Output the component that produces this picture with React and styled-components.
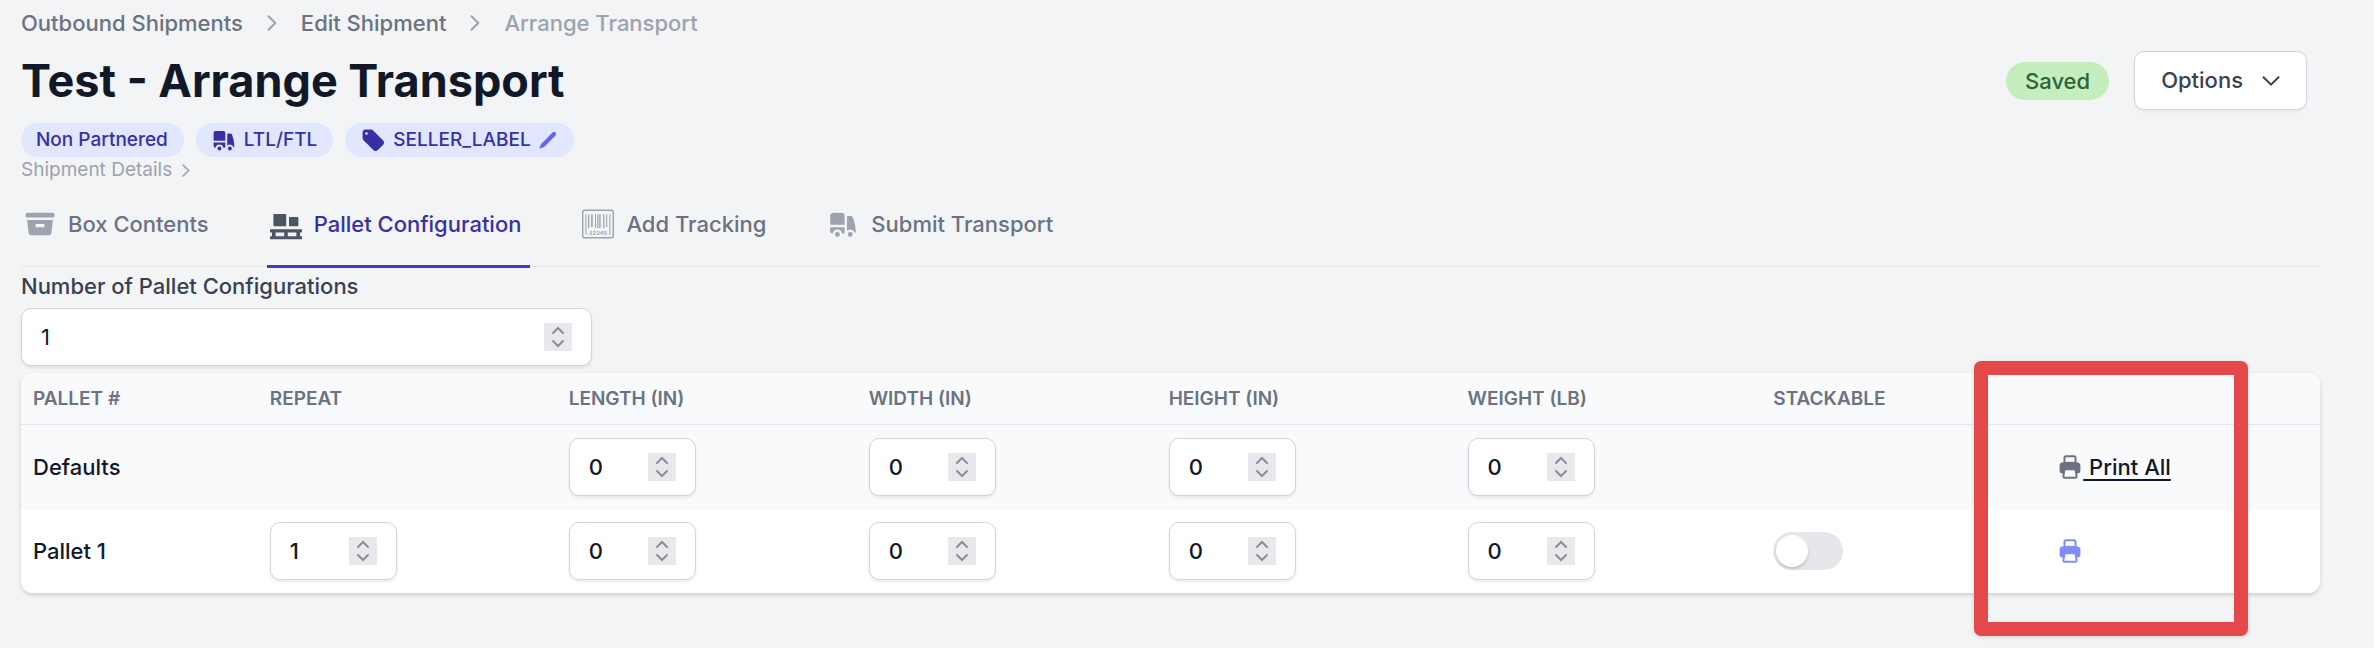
import React, { useState } from "react";
import styled, { createGlobalStyle } from "styled-components";

const ICONS = {
  truck:
    "M6.5 3c-1.051 0-2.093.04-3.125.117A1.49 1.49 0 0 0 2 4.607V10.5h9V4.606c0-.771-.59-1.43-1.375-1.489A41.568 41.568 0 0 0 6.5 3ZM2 12v2.5A1.5 1.5 0 0 0 3.5 16h.041a3 3 0 0 1 5.918 0h.791a.75.75 0 0 0 .75-.75V12H2ZM6.5 18a1.5 1.5 0 1 0 0-3 1.5 1.5 0 0 0 0 3ZM13.25 5a.75.75 0 0 0-.75.75v8.514a3.001 3.001 0 0 1 4.893 1.44c.37-.275.61-.719.595-1.227a24.905 24.905 0 0 0-1.784-8.549A1.486 1.486 0 0 0 14.823 5H13.25ZM14.5 18a1.5 1.5 0 1 0 0-3 1.5 1.5 0 0 0 0 3Z",
  tag: "M4.5 2A2.5 2.5 0 0 0 2 4.5v3.879a2.5 2.5 0 0 0 .732 1.767l7.5 7.5a2.5 2.5 0 0 0 3.536 0l3.878-3.878a2.5 2.5 0 0 0 0-3.536l-7.5-7.5A2.5 2.5 0 0 0 8.38 2H4.5ZM5 6a1 1 0 1 0 0-2 1 1 0 0 0 0 2Z",
  pencil:
    "m2.695 14.762-1.262 3.155a.5.5 0 0 0 .65.65l3.155-1.262a4 4 0 0 0 1.343-.886L17.5 5.501a2.121 2.121 0 0 0-3-3L3.58 13.419a4 4 0 0 0-.885 1.343Z",
  archive:
    "M2 3a1 1 0 0 0-1 1v1a1 1 0 0 0 1 1h16a1 1 0 0 0 1-1V4a1 1 0 0 0-1-1H2ZM2 7.5h16l-.811 7.71a2 2 0 0 1-1.99 1.79H4.802a2 2 0 0 1-1.99-1.79L2 7.5ZM7 11a1 1 0 0 1 1-1h4a1 1 0 1 1 0 2H8a1 1 0 0 1-1-1Z",
  printer:
    "M5 2.75C5 1.784 5.784 1 6.75 1h6.5c.966 0 1.75.784 1.75 1.75v3.552c.377.046.752.097 1.126.153A2.212 2.212 0 0 1 18 8.653v4.097A2.25 2.25 0 0 1 15.75 15h-.241l.305 1.984A1.75 1.75 0 0 1 14.084 19H5.915a1.75 1.75 0 0 1-1.73-2.016L4.492 15H4.25A2.25 2.25 0 0 1 2 12.75V8.653c0-1.082.775-2.034 1.874-2.198.374-.056.75-.107 1.127-.153L5 2.75Zm8.5 3.397a41.533 41.533 0 0 0-7 0V2.75a.25.25 0 0 1 .25-.25h6.5a.25.25 0 0 1 .25.25v3.397ZM6.608 12.5a.25.25 0 0 0-.247.212l-.693 4.5a.25.25 0 0 0 .247.288h8.17a.25.25 0 0 0 .246-.288l-.692-4.5a.25.25 0 0 0-.247-.212H6.608Z",
};

const Icon = ({ name, size }) => (
  <svg width={size} height={size} viewBox="0 0 20 20" fill="currentColor" aria-hidden="true">
    <path fillRule="evenodd" clipRule="evenodd" d={ICONS[name]} />
  </svg>
);

const ChevronRight = ({ width, height }) => (
  <svg width={width} height={height} viewBox="0 0 10 16" fill="none" aria-hidden="true">
    <path
      d="M1.5 1.2 8.3 8l-6.8 6.8"
      stroke="#9ca3af"
      strokeWidth="2"
      strokeLinecap="round"
      strokeLinejoin="round"
    />
  </svg>
);

const PalletIcon = () => (
  <svg width="32" height="32" viewBox="0 0 32 32" fill="currentColor" aria-hidden="true">
    <rect x="3.4" y="6" width="12.8" height="12.2" rx="0.6" />
    <rect x="19" y="9" width="9.4" height="9.2" rx="0.6" />
    <rect x="0" y="21.2" width="32" height="3.2" rx="0.6" />
    <rect x="0" y="28.3" width="32" height="3" rx="0.6" />
    <rect x="2" y="24" width="3.6" height="5" />
    <rect x="14.2" y="24" width="3.6" height="5" />
    <rect x="26.4" y="24" width="3.6" height="5" />
  </svg>
);

const BarcodeIcon = () => (
  <svg width="32" height="32" viewBox="0 0 32 32" fill="currentColor" aria-hidden="true">
    <rect x="0.7" y="2.2" width="30.6" height="27.6" rx="2" fill="none" stroke="currentColor" strokeWidth="1.4" />
    <rect x="3.4" y="6.4" width="1" height="20.4" />
    <rect x="6.1" y="6.4" width="1.2" height="13.6" />
    <rect x="9.1" y="6.4" width="1.6" height="12.6" />
    <rect x="13" y="6.4" width="1" height="13.6" />
    <rect x="15.2" y="6.4" width="1.2" height="13.6" />
    <rect x="17.2" y="6.4" width="1.4" height="13.6" />
    <rect x="21.2" y="6.4" width="1.2" height="13.6" />
    <rect x="24.2" y="6.4" width="1" height="12.6" />
    <rect x="27.4" y="6.4" width="1" height="20.4" />
    <text x="16" y="27" textAnchor="middle" fontSize="6" fontWeight="700" fontFamily="Liberation Mono, monospace">
      12345
    </text>
  </svg>
);

const HEADINGS = [
  "Pallet #",
  "Repeat",
  "Length (in)",
  "Width (in)",
  "Height (in)",
  "Weight (lb)",
  "Stackable",
];

const DIMENSIONS = ["Length", "Width", "Height", "Weight"];

const COLUMN_WIDTHS = ["10.3%", "13%", "13.05%", "13.05%", "13%", "13.3%", "12.35%", "11.95%"];

const NumberField = ({ id, label, start = 0, wide }) => {
  const [value, setValue] = useState(start);
  return (
    <Field $wide={wide}>
      <FieldInput
        id={id}
        type="number"
        aria-label={label}
        value={value}
        $wide={wide}
        onChange={(e) => setValue(Number(e.target.value))}
      />
      <Stepper>
        <StepButton type="button" aria-label="Increase" onClick={() => setValue(value + 1)}>
          <svg width="28" height="14" viewBox="0 0 28 14" fill="none">
            <path d="M9 10l5-5 5 5" stroke="#8e8c99" strokeWidth="2" strokeLinecap="round" />
          </svg>
        </StepButton>
        <StepButton type="button" aria-label="Decrease" onClick={() => setValue(value - 1)}>
          <svg width="28" height="14" viewBox="0 0 28 14" fill="none">
            <path d="M9 4l5 5 5-5" stroke="#8e8c99" strokeWidth="2" strokeLinecap="round" />
          </svg>
        </StepButton>
      </Stepper>
    </Field>
  );
};

const App = () => {
  return (
    <Page>
      <GlobalStyle />
      <Crumbs aria-label="Breadcrumb">
        <Crumb href="#">Outbound Shipments</Crumb>
        <ChevronRight width={10} height={16} />
        <Crumb href="#">Edit Shipment</Crumb>
        <ChevronRight width={10} height={16} />
        <Crumb href="#" $current>
          Arrange Transport
        </Crumb>
      </Crumbs>

      <Header>
        <Title>Test - Arrange Transport</Title>
        <Actions>
          <Saved>Saved</Saved>
          <OptionsButton type="button">
            Options
            <svg width="18" height="10" viewBox="0 0 18 10" fill="none">
              <path d="M1.5 1.2 9 8.6l7.5-7.4" stroke="currentColor" strokeWidth="2" strokeLinecap="round" strokeLinejoin="round" />
            </svg>
          </OptionsButton>
        </Actions>
      </Header>

      <Pills>
        <Pill>Non Partnered</Pill>
        <Pill>
          <Icon name="truck" size={26} />
          LTL/FTL
        </Pill>
        <Pill>
          <Icon name="tag" size={26} />
          SELLER_LABEL
          <EditButton type="button" aria-label="Edit label">
            <Icon name="pencil" size={20} />
          </EditButton>
        </Pill>
      </Pills>
      <DetailsButton type="button">
        Shipment Details
        <ChevronRight width={8} height={13} />
      </DetailsButton>

      <Tabs>
        <Tab href="#">
          <Icon name="archive" size={32} />
          <span>Box Contents</span>
        </Tab>
        <Tab href="#" $active>
          <PalletIcon />
          <span>Pallet Configuration</span>
        </Tab>
        <Tab href="#">
          <BarcodeIcon />
          <span>Add Tracking</span>
        </Tab>
        <Tab href="#">
          <Icon name="truck" size={32} />
          <span>Submit Transport</span>
        </Tab>
      </Tabs>

      <Label htmlFor="pallet-count">Number of Pallet Configurations</Label>
      <NumberField id="pallet-count" start={1} wide />

      <TableWrap>
        <Table>
          <colgroup>
            {COLUMN_WIDTHS.map((width, i) => (
              <col key={i} width={width} />
            ))}
          </colgroup>
          <thead>
            <tr>
              {HEADINGS.map((heading) => (
                <Th key={heading}>{heading}</Th>
              ))}
              <Th />
            </tr>
          </thead>
          <tbody>
            <Row $shaded>
              <Td>Defaults</Td>
              <Td />
              {DIMENSIONS.map((name) => (
                <Td key={name}>
                  <NumberField label={`Default ${name}`} />
                </Td>
              ))}
              <Td />
              <Td>
                <PrintLink href="#">
                  <Icon name="printer" size={26} />
                  <span>&nbsp;Print All</span>
                </PrintLink>
              </Td>
            </Row>
            <Row>
              <Td>Pallet 1</Td>
              <Td>
                <NumberField label="Repeat" start={1} />
              </Td>
              {DIMENSIONS.map((name) => (
                <Td key={name}>
                  <NumberField label={name} />
                </Td>
              ))}
              <Td>
                <Toggle type="checkbox" role="switch" aria-label="Stackable" />
              </Td>
              <Td>
                <PrintLink href="#" aria-label="Print pallet 1" $accent>
                  <Icon name="printer" size={26} />
                </PrintLink>
              </Td>
            </Row>
          </tbody>
        </Table>
        <Highlight />
      </TableWrap>
    </Page>
  );
};

export default App;

const GlobalStyle = createGlobalStyle`
  *, *::before, *::after {
    box-sizing: border-box;
  }

  body {
    margin: 0;
    background: #f2f4f6;
  }

  svg {
    display: block;
    flex-shrink: 0;
  }

  button, input {
    font: inherit;
    color: inherit;
  }
`;

const Page = styled.main`
  padding: 8px 54px 54px 21px;
  font-family: Inter, "Liberation Sans", sans-serif;
  font-size: 22px;
  font-weight: 500;
  line-height: 30px;
  color: #111827;
`;

const Crumbs = styled.nav`
  display: flex;
  align-items: center;
  gap: 24px;
`;

const Crumb = styled.a`
  color: ${({ $current }) => ($current ? "#9ca3af" : "#6b7280")};
  text-decoration: none;
`;

const Header = styled.header`
  display: flex;
  align-items: center;
  justify-content: space-between;
  margin: 13px 0;
  padding-right: 13px;
`;

const Title = styled.h1`
  margin: 0;
  font-size: 45px;
  font-weight: 700;
  line-height: 56px;
`;

const Actions = styled.div`
  display: flex;
  align-items: center;
  gap: 25px;
`;

const Saved = styled.span`
  padding: 4px 19px;
  border-radius: 19px;
  background: #c6edbd;
  color: #2a663a;
`;

const OptionsButton = styled.button`
  display: flex;
  align-items: center;
  gap: 19px;
  padding: 13px 26px;
  border: 1px solid #d1d5db;
  border-radius: 10px;
  background: #fff;
  box-shadow: 0 2px 3px rgba(0, 0, 0, 0.05);
  color: #374151;
  line-height: 31px;
`;

const Pills = styled.div`
  display: flex;
  gap: 12px;
`;

const Pill = styled.span`
  display: flex;
  align-items: center;
  gap: 7px;
  height: 34px;
  padding: 0 16px 0 15px;
  border-radius: 17px;
  background: #e0e7ff;
  color: #3730a3;
  font-size: 19px;
`;

const EditButton = styled.button`
  padding: 0;
  border: 0;
  background: none;
  color: #6366f1;
`;

const DetailsButton = styled.button`
  display: flex;
  align-items: center;
  gap: 10px;
  padding: 0;
  border: 0;
  background: none;
  color: #9ca3af;
  font-size: 19px;
  font-weight: 400;
  line-height: 26px;
`;

const Tabs = styled.nav`
  display: flex;
  gap: 49px;
  margin-top: 26px;
  border-bottom: 1px solid #e5e7eb;
`;

const Tab = styled.a`
  display: flex;
  align-items: center;
  gap: 12px;
  height: 59px;
  margin-bottom: -2px;
  padding: 0 9px 26px 3px;
  border-bottom: 3px solid ${({ $active }) => ($active ? "#4338ca" : "transparent")};
  color: ${({ $active }) => ($active ? "#3730a3" : "#6b7280")};
  text-decoration: none;

  svg {
    color: ${({ $active }) => ($active ? "#4b5563" : "#9ca3af")};
  }
`;

const Label = styled.label`
  display: block;
  margin: 4px 0 7px;
  color: #374151;
`;

const Field = styled.div`
  display: flex;
  align-items: center;
  justify-content: space-between;
  width: ${({ $wide }) => ($wide ? "571px" : "127px")};
  height: 58px;
  padding: 0 19px;
  border: 1px solid #d1d5db;
  border-radius: 10px;
  background: #fff;
  box-shadow: 0 2px 3px rgba(0, 0, 0, 0.08);
`;

const FieldInput = styled.input`
  flex: 1;
  min-width: 0;
  padding: 0;
  border: 0;
  outline: 0;
  background: none;
  font-weight: ${({ $wide }) => ($wide ? 400 : 500)};
  appearance: textfield;

  &::-webkit-inner-spin-button {
    appearance: none;
    margin: 0;
  }
`;

const Stepper = styled.div`
  display: flex;
  flex-direction: column;
  width: 28px;
  background: #e9e8ed;
`;

const StepButton = styled.button`
  padding: 0;
  border: 0;
  background: none;
`;

const TableWrap = styled.section`
  position: relative;
  margin-top: 7px;
`;

const Table = styled.table`
  width: 100%;
  border-spacing: 0;
  border-radius: 12px;
  overflow: hidden;
  table-layout: fixed;
  background: #fff;
  box-shadow: 0 2px 4px rgba(0, 0, 0, 0.16);
`;

const Th = styled.th`
  height: 52px;
  padding: 0 12px;
  border-bottom: 1px solid #e5e7eb;
  background: #f9fafc;
  color: #6b7280;
  font-size: 19px;
  font-weight: 600;
  text-align: left;
  text-transform: uppercase;
`;

const Row = styled.tr`
  background: ${({ $shaded }) => ($shaded ? "#f9fafc" : "#fff")};
`;

const Td = styled.td`
  height: 84px;
  padding: 0 12px;
`;

const PrintLink = styled.a`
  display: flex;
  align-items: center;
  color: #111827;
  text-decoration: none;

  svg {
    color: ${({ $accent }) => ($accent ? "#818cf8" : "#6b7280")};
  }

  span {
    text-decoration: underline;
    text-decoration-thickness: 2px;
    text-underline-offset: 4px;
    text-decoration-skip-ink: none;
  }
`;

const Toggle = styled.input`
  display: block;
  appearance: none;
  width: 70px;
  height: 38px;
  margin: 0;
  padding: 3px;
  border-radius: 19px;
  background: #e5e7eb;

  &::before {
    content: "";
    display: block;
    width: 32px;
    height: 32px;
    border-radius: 50%;
    background: #fff;
    box-shadow: 0 2px 3px rgba(0, 0, 0, 0.16);
  }

  &:checked {
    padding-left: 35px;
    background: #4f46e5;
  }
`;

/* Callout frame laid over the print column */
const Highlight = styled.div`
  position: absolute;
  top: -12px;
  right: 72px;
  bottom: -43px;
  width: 274px;
  border: 14px solid #e5484b;
  border-radius: 7px;
  box-shadow: 0 1px 4px rgba(0, 0, 0, 0.15);
  pointer-events: none;
`;
